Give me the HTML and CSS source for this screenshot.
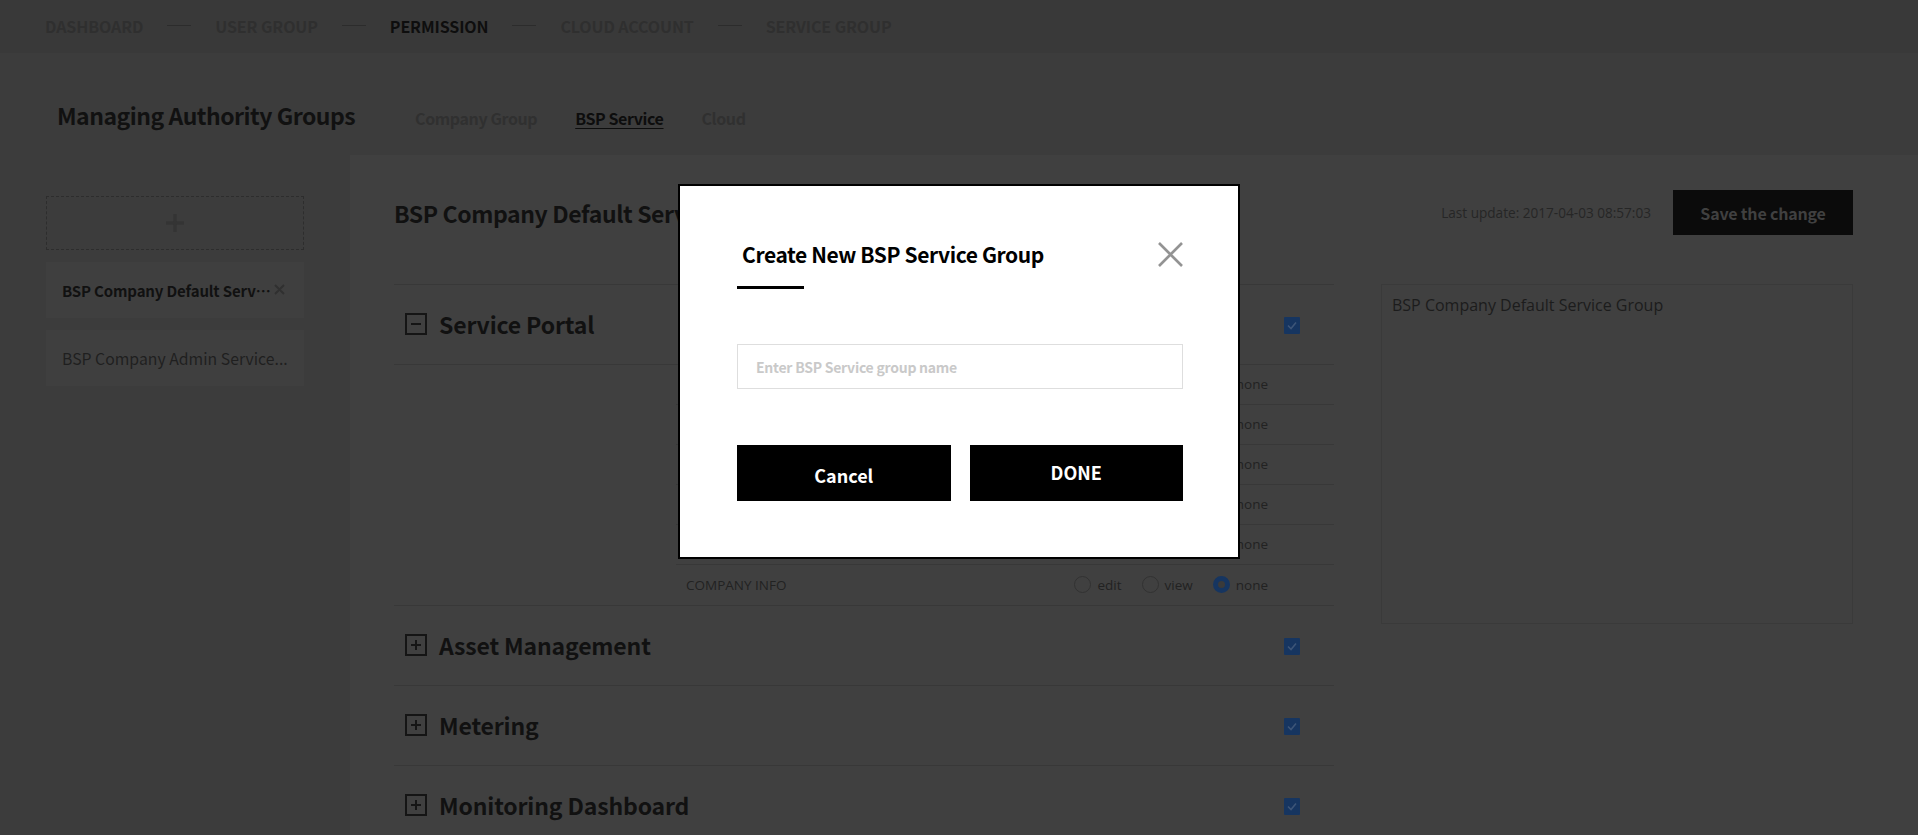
FILE: index.html
```html
<!DOCTYPE html>
<html lang="en">
<head>
<meta charset="utf-8">
<title>Managing Authority Groups</title>
<link rel="stylesheet" href="styles.css">
</head>
<body>
<nav class="topnav">
  <a class="step">DASHBOARD</a><span class="sep"></span>
  <a class="step">USER GROUP</a><span class="sep"></span>
  <a class="step active">PERMISSION</a><span class="sep"></span>
  <a class="step">CLOUD ACCOUNT</a><span class="sep"></span>
  <a class="step">SERVICE GROUP</a>
</nav>

<header class="page-head">
  <h1 class="page-title">Managing Authority Groups</h1>
  <div class="tabs">
    <a class="tab">Company Group</a>
    <a class="tab active">BSP Service</a>
    <a class="tab">Cloud</a>
  </div>
</header>

<div class="layout">
  <aside class="sidebar">
    <button class="add-group" aria-label="Add group">
      <svg width="20" height="20" viewBox="0 0 20 20"><path d="M10 1v18M1 10h18" stroke="#343434" stroke-width="3.5" fill="none"/></svg>
    </button>
    <div class="group-card selected">
      <span class="group-name">BSP Company Default Service Group</span>
      <span class="remove" aria-label="Remove">
        <svg width="11" height="11" viewBox="0 0 11 11"><path d="M1 1l9 9M10 1l-9 9" stroke="#303030" stroke-width="1.8" fill="none"/></svg>
      </span>
    </div>
    <div class="group-card">
      <span class="group-name plain" title="BSP Company Admin Service Group">BSP Company Admin Service...</span>
    </div>
  </aside>

  <main class="main">
    <div class="main-head">
      <h2 class="group-title">BSP Company Default Service Group</h2>
      <div class="head-actions">
        <span class="last-update">Last update: 2017-04-03 08:57:03</span>
        <button class="save-btn">Save the change</button>
      </div>
    </div>

    <div class="main-body">
      <div class="sections">
        <section class="perm-section open">
          <div class="section-head">
            <span class="toggle"><svg width="22" height="22" viewBox="0 0 22 22"><rect x="1" y="1" width="20" height="20" fill="none" stroke="#151515" stroke-width="2"/><path d="M6 11h10" stroke="#151515" stroke-width="2"/></svg></span>
            <h3 class="section-title">Service Portal</h3>
            <span class="checkbox"><svg width="16" height="17" viewBox="0 0 16 17"><path d="M4 8.5l3 3 5-6" stroke="#3d5577" stroke-width="1.6" fill="none"/></svg></span>
          </div>
          <ul class="perm-rows">
            <li class="perm-row"><span class="perm-label">DASHBOARD</span><span class="radios"><span class="opt"><span class="radio"></span>edit</span><span class="opt"><span class="radio"></span>view</span><span class="opt"><span class="radio on"></span>none</span></span></li>
            <li class="perm-row"><span class="perm-label">USER MANAGEMENT</span><span class="radios"><span class="opt"><span class="radio"></span>edit</span><span class="opt"><span class="radio"></span>view</span><span class="opt"><span class="radio on"></span>none</span></span></li>
            <li class="perm-row"><span class="perm-label">SERVICE REQUEST</span><span class="radios"><span class="opt"><span class="radio"></span>edit</span><span class="opt"><span class="radio"></span>view</span><span class="opt"><span class="radio on"></span>none</span></span></li>
            <li class="perm-row"><span class="perm-label">NOTICE</span><span class="radios"><span class="opt"><span class="radio"></span>edit</span><span class="opt"><span class="radio"></span>view</span><span class="opt"><span class="radio on"></span>none</span></span></li>
            <li class="perm-row"><span class="perm-label">BILLING</span><span class="radios"><span class="opt"><span class="radio"></span>edit</span><span class="opt"><span class="radio"></span>view</span><span class="opt"><span class="radio on"></span>none</span></span></li>
            <li class="perm-row"><span class="perm-label">COMPANY INFO</span><span class="radios"><span class="opt"><span class="radio"></span>edit</span><span class="opt"><span class="radio"></span>view</span><span class="opt"><span class="radio on"></span>none</span></span></li>
          </ul>
        </section>

        <section class="perm-section">
          <div class="section-head">
            <span class="toggle"><svg width="22" height="22" viewBox="0 0 22 22"><rect x="1" y="1" width="20" height="20" fill="none" stroke="#151515" stroke-width="2"/><path d="M6 11h10M11 6v10" stroke="#151515" stroke-width="2"/></svg></span>
            <h3 class="section-title">Asset Management</h3>
            <span class="checkbox"><svg width="16" height="17" viewBox="0 0 16 17"><path d="M4 8.5l3 3 5-6" stroke="#3d5577" stroke-width="1.6" fill="none"/></svg></span>
          </div>
        </section>

        <section class="perm-section">
          <div class="section-head">
            <span class="toggle"><svg width="22" height="22" viewBox="0 0 22 22"><rect x="1" y="1" width="20" height="20" fill="none" stroke="#151515" stroke-width="2"/><path d="M6 11h10M11 6v10" stroke="#151515" stroke-width="2"/></svg></span>
            <h3 class="section-title">Metering</h3>
            <span class="checkbox"><svg width="16" height="17" viewBox="0 0 16 17"><path d="M4 8.5l3 3 5-6" stroke="#3d5577" stroke-width="1.6" fill="none"/></svg></span>
          </div>
        </section>

        <section class="perm-section">
          <div class="section-head">
            <span class="toggle"><svg width="22" height="22" viewBox="0 0 22 22"><rect x="1" y="1" width="20" height="20" fill="none" stroke="#151515" stroke-width="2"/><path d="M6 11h10M11 6v10" stroke="#151515" stroke-width="2"/></svg></span>
            <h3 class="section-title">Monitoring Dashboard</h3>
            <span class="checkbox"><svg width="16" height="17" viewBox="0 0 16 17"><path d="M4 8.5l3 3 5-6" stroke="#3d5577" stroke-width="1.6" fill="none"/></svg></span>
          </div>
        </section>
      </div>

      <div class="desc-box">BSP Company Default Service Group</div>
    </div>
  </main>
</div>

<div class="backdrop">
  <div class="modal" role="dialog">
    <div class="modal-head">
      <h2 class="modal-title">Create New BSP Service Group</h2>
      <button class="modal-close" aria-label="Close">
        <svg width="25" height="25" viewBox="0 0 25 25"><path d="M1 1l23 23M24 1L1 24" stroke="#939393" stroke-width="2.6" fill="none"/></svg>
      </button>
    </div>
    <div class="modal-bar"></div>
    <input class="modal-input" type="text" placeholder="Enter BSP Service group name">
    <div class="modal-actions">
      <button class="btn btn-cancel">Cancel</button>
      <button class="btn btn-done">DONE</button>
    </div>
  </div>
</div>
</body>
</html>
```

FILE: styles.css
```css
* {
  box-sizing: border-box;
  margin: 0;
  padding: 0;
}

body {
  width: 1918px;
  height: 835px;
  overflow: hidden;
  background: #404040;
  color: #111;
  font-family: "Noto Sans CJK KR", "Noto Sans", sans-serif;
}

/* top step navigation */
.topnav {
  height: 53px;
  background: #393939;
  display: flex;
  align-items: center;
  gap: 24px;
  padding: 0 0 2px 45px;
}

.step {
  font-size: 16px;
  font-weight: 700;
  line-height: 20px;
  letter-spacing: -0.1px;
  color: #2f2f2f;
  text-decoration: none;
}

.step.active {
  color: #0e0e0e;
}

.sep {
  width: 24px;
  height: 1px;
  background: #2c2c2c;
}

/* page heading */
.page-head {
  height: 102px;
  background: #3c3c3c;
  display: flex;
  align-items: baseline;
  padding: 47px 0 0 57px;
}

.page-title {
  font-size: 23px;
  line-height: 30px;
  font-weight: 700;
  letter-spacing: -0.5px;
  color: #111;
}

.tabs {
  display: flex;
  gap: 38px;
  margin-left: 60px;
}

.tab {
  font-size: 16px;
  font-weight: 700;
  letter-spacing: -0.4px;
  color: #303030;
  text-decoration: none;
}

.tab.active {
  color: #0d0d0d;
  text-decoration: underline;
  text-underline-offset: 3px;
}

/* layout */
.layout {
  display: flex;
  height: 680px;
}

.sidebar {
  width: 350px;
  flex: none;
  background: #3c3c3c;
  padding: 41px 46px 0;
  display: flex;
  flex-direction: column;
  gap: 12px;
}

.add-group {
  height: 54px;
  border: 1px dashed #2d2d2d;
  background: transparent;
  display: flex;
  align-items: center;
  justify-content: center;
}

.group-card {
  position: relative;
  height: 56px;
  background: #3f3f3f;
  display: flex;
  align-items: center;
  padding: 0 16px;
}

.group-name {
  font-size: 15px;
  font-weight: 700;
  letter-spacing: -0.15px;
  color: #111;
  white-space: nowrap;
  overflow: hidden;
  text-overflow: ellipsis;
  max-width: 213px;
}

.group-name.plain {
  font-weight: 400;
  font-size: 15.8px;
  color: #1f1f1f;
  letter-spacing: 0;
  max-width: none;
}

.remove {
  position: absolute;
  right: 19px;
  top: 22px;
  display: flex;
}

.main {
  flex: 1;
  padding: 35px 65px 0 44px;
}

.main-head {
  height: 45px;
  display: flex;
  align-items: center;
  justify-content: space-between;
}

.group-title {
  font-size: 23px;
  font-weight: 700;
  letter-spacing: -0.4px;
  color: #111;
  white-space: nowrap;
}

.head-actions {
  display: flex;
  align-items: center;
  gap: 22px;
}

.last-update {
  font-family: "Open Sans", sans-serif;
  font-size: 13.6px;
  color: #262626;
}

.save-btn {
  width: 180px;
  height: 45px;
  border: none;
  background: #0b0b0b;
  color: #404040;
  font-family: "Noto Sans CJK KR", sans-serif;
  font-size: 16px;
  font-weight: 700;
  letter-spacing: -0.2px;
}

.main-body {
  display: flex;
  gap: 47px;
  margin-top: 49px;
}

.sections {
  width: 940px;
  flex: none;
  border-top: 1px solid #383838;
}

.perm-section {
  border-bottom: 1px solid #383838;
}

.section-head {
  height: 79px;
  display: flex;
  align-items: center;
  padding: 0 34px 2px 11px;
}

.perm-section.open .section-head {
  border-bottom: 1px solid #383838;
  height: 80px;
}

.toggle {
  display: flex;
  margin-right: 12px;
}

.section-title {
  font-size: 23px;
  font-weight: 700;
  letter-spacing: -0.15px;
  color: #111;
}

.checkbox {
  margin: 3px 0 0 auto;
  width: 16px;
  height: 17px;
  background: #163560;
  border-radius: 1px;
  display: flex;
}

.perm-rows {
  list-style: none;
  margin-left: 282px;
}

.perm-row {
  height: 40px;
  display: flex;
  align-items: center;
  padding: 0 66px 1px 10px;
  border-bottom: 1px solid #383838;
  font-family: "Open Sans", sans-serif;
  font-size: 13.5px;
  color: #222;
}

.perm-row:last-child {
  border-bottom: none;
}

.radios {
  margin-left: auto;
  display: flex;
  gap: 20px;
}

.opt {
  display: flex;
  align-items: center;
  gap: 6px;
}

.radio {
  width: 17px;
  height: 17px;
  border-radius: 50%;
  border: 1px solid #323232;
}

.radio.on {
  border: 5.5px solid #163560;
  background: #3a3a3a;
}

.desc-box {
  width: 472px;
  height: 340px;
  border: 1px solid #3a3a3a;
  padding: 9px 10px;
  font-family: "Open Sans", sans-serif;
  font-size: 16px;
  color: #1c1c1c;
}

/* modal */
.backdrop {
  position: fixed;
  inset: 0;
  display: flex;
  justify-content: center;
  align-items: flex-start;
  padding-top: 184px;
}

.modal {
  width: 562px;
  background: #fff;
  border: 2px solid #000;
  padding: 53px 55px 56px 57px;
}

.modal-head {
  height: 30px;
  display: flex;
  align-items: center;
  justify-content: space-between;
}

.modal-title {
  font-size: 21px;
  line-height: 30px;
  font-weight: 700;
  letter-spacing: -0.4px;
  color: #000;
  padding-left: 5px;
}

.modal-close {
  border: none;
  background: none;
  display: flex;
}

.modal-bar {
  width: 67px;
  height: 3px;
  background: #000;
  margin-top: 17px;
}

.modal-input {
  display: block;
  width: 100%;
  height: 45px;
  margin-top: 55px;
  border: 1px solid #dedede;
  padding: 0 18px;
  font-family: "Noto Sans CJK KR", sans-serif;
  font-size: 14px;
  font-weight: 700;
  letter-spacing: -0.25px;
  outline: none;
}

.modal-input::placeholder {
  color: #c9c9c9;
}

.modal-actions {
  display: flex;
  gap: 19px;
  margin-top: 56px;
}

.btn {
  height: 56px;
  flex: 1;
  border: none;
  background: #000;
  color: #fff;
  font-family: "Noto Sans CJK KR", sans-serif;
  font-size: 18px;
  font-weight: 700;
  padding-bottom: 3px;
}

.btn-cancel {
  padding: 4px 0 0;
}
```
